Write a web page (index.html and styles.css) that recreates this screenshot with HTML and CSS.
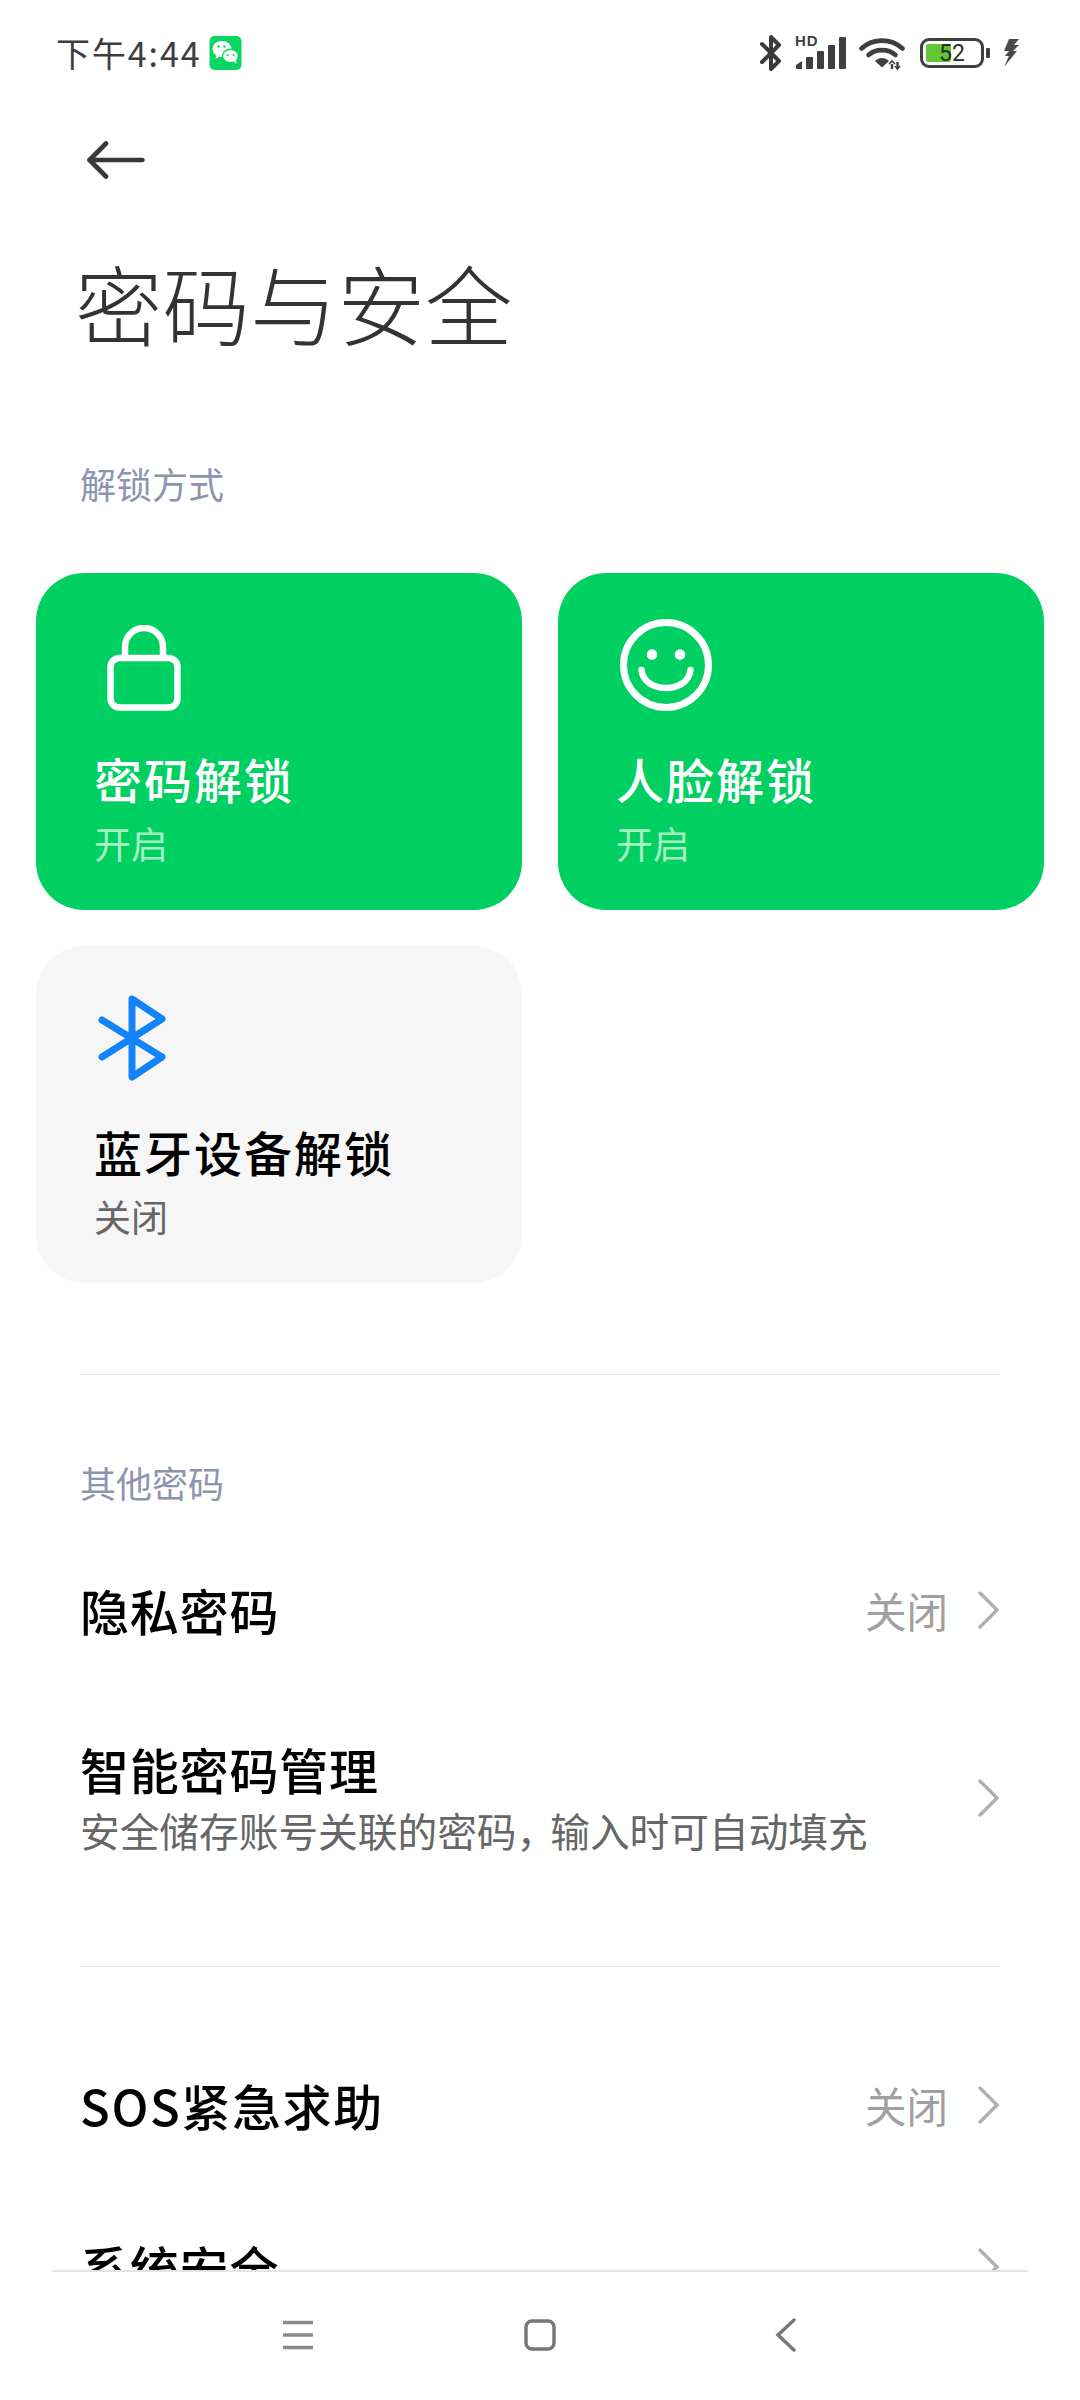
FILE: index.html
```html
<!DOCTYPE html>
<html lang="zh-CN">
<head>
<meta charset="utf-8">
<title>密码与安全</title>
<link rel="stylesheet" href="styles.css">
</head>
<body>
<div class="phone">
  <header class="status">
    <div class="status-left">
      <span class="clock">下午4:44</span>
      <svg class="wechat" viewBox="0 0 32 34"><rect width="32" height="34" rx="5" fill="#0ad664"/><ellipse cx="12.5" cy="13" rx="9.5" ry="8" fill="#fff"/><path d="M7 18l-1 5 5-3z" fill="#fff"/><ellipse cx="21" cy="20" rx="8" ry="6.8" fill="#fff" stroke="#0ad664" stroke-width="1.4"/><path d="M24 25l3 3-.5-5z" fill="#fff"/><circle cx="9" cy="10.5" r="1.2" fill="#0ad664"/><circle cx="15" cy="10.5" r="1.2" fill="#0ad664"/><circle cx="18" cy="19" r="1" fill="#0ad664"/><circle cx="24" cy="19" r="1" fill="#0ad664"/></svg>
    </div>
    <div class="status-right">
      <svg class="st-bt" viewBox="0 0 24 38"><path d="M3 10l17 17-8 8V3l8 8L3 28" fill="none" stroke="#3a3a3a" stroke-width="4" stroke-linejoin="round" stroke-linecap="round"/></svg>
      <div class="st-signal">
        <span class="hd">HD</span>
        <svg viewBox="0 0 51 32"><g fill="#3f3f3f"><path d="M2 32a1 1 0 0 1-1-1v-3l6-4v8z"/><rect x="11" y="20" width="7" height="12" rx="1"/><rect x="22" y="14" width="7" height="18" rx="1"/><rect x="33" y="8" width="7" height="24" rx="1"/><rect x="44" y="0" width="7" height="32" rx="1"/></g></svg>
      </div>
      <svg class="st-wifi" viewBox="0 0 46 34"><g fill="none" stroke="#3f3f3f" stroke-width="4.6" stroke-linecap="round"><path d="M2.5 12.5C14 2 32 2 43.5 12.5"/><path d="M9.5 19C17 12.500 29 12.500 36.500 19"/></g><path d="M16 25c4-4 10-4 14 0l-7 6.500z" fill="#3f3f3f"/><path d="M33 28v5M38.500 26v7" stroke="#3f3f3f" stroke-width="2.400" fill="none"/><path d="M30 28l3-3 3 3M36 30l2.500 3 2.500-3" fill="none" stroke="#3f3f3f" stroke-width="1.600"/></svg>
      <div class="battery">
        <div class="bat-body"><div class="bat-fill"></div><span class="bat-num">52</span></div>
        <div class="bat-nub"></div>
      </div>
      <svg class="st-bolt" viewBox="0 0 17 28"><path d="M6 0h10l-5 6h5L10 12h4L1 28l5-11H2l4-5H1z" fill="#4a4a4a"/></svg>
    </div>
  </header>

  <main class="content">
    <button class="back" aria-label="返回">
      <svg viewBox="0 0 59 38"><path d="M20 2.500L3.500 19 20 35.500M3.500 19H56.500" fill="none" stroke="#383838" stroke-width="4.600" stroke-linecap="round" stroke-linejoin="round"/></svg>
    </button>
    <h1 class="title">密码与安全</h1>
    <div class="section-label first">解锁方式</div>

    <div class="cards">
      <article class="card on">
        <div class="card-icon">
          <svg class="i-lock" viewBox="0 0 74 86"><path d="M18 33V22a19 19 0 0 1 38 0v11" fill="none" stroke="#fff" stroke-width="6.500"/><rect x="3.500" y="33" width="67" height="49.500" rx="9" fill="none" stroke="#fff" stroke-width="6.500"/></svg>
        </div>
        <div class="card-name">密码解锁</div>
        <div class="card-state">开启</div>
      </article>
      <article class="card on">
        <div class="card-icon">
          <svg class="i-face" viewBox="0 0 92 92"><circle cx="46" cy="46" r="42.500" fill="none" stroke="#fff" stroke-width="7"/><circle cx="32" cy="35.500" r="5.300" fill="#fff"/><circle cx="60" cy="35.500" r="5.300" fill="#fff"/><path d="M21.500 51C24 75 68 75 70.500 51" fill="none" stroke="#fff" stroke-width="6.500" stroke-linecap="round"/></svg>
        </div>
        <div class="card-name">人脸解锁</div>
        <div class="card-state">开启</div>
      </article>
      <article class="card off">
        <div class="card-icon">
          <svg class="i-bt" viewBox="0 0 68 86"><path d="M4 25l60 37-30 20V4l30 20L4 62" fill="none" stroke="#1283f8" stroke-width="7" stroke-linecap="round" stroke-linejoin="round"/></svg>
        </div>
        <div class="card-name">蓝牙设备解锁</div>
        <div class="card-state">关闭</div>
      </article>
    </div>

    <hr class="divider d1">
    <div class="section-label second">其他密码</div>

    <div class="row r-single r-privacy">
      <div class="row-text"><div class="row-name">隐私密码</div></div>
      <span class="row-value">关闭</span>
      <svg class="chev" viewBox="0 0 22 38"><path d="M2 2l17 17L2 36" fill="none" stroke="#b0b0b0" stroke-width="3.400" stroke-linecap="round"/></svg>
    </div>
    <div class="row r-smart">
      <div class="row-text">
        <div class="row-name">智能密码管理</div>
        <div class="row-desc">安全储存账号关联的密码<span class="comma">，</span>输入时可自动填充</div>
      </div>
      <svg class="chev chev-low" viewBox="0 0 22 38"><path d="M2 2l17 17L2 36" fill="none" stroke="#b0b0b0" stroke-width="3.400" stroke-linecap="round"/></svg>
    </div>

    <hr class="divider d2">

    <div class="row r-single r-sos">
      <div class="row-text"><div class="row-name">SOS紧急求助</div></div>
      <span class="row-value">关闭</span>
      <svg class="chev" viewBox="0 0 22 38"><path d="M2 2l17 17L2 36" fill="none" stroke="#b0b0b0" stroke-width="3.400" stroke-linecap="round"/></svg>
    </div>
    <div class="row r-single r-sys">
      <div class="row-text"><div class="row-name">系统安全</div></div>
      <svg class="chev" viewBox="0 0 22 38"><path d="M2 2l17 17L2 36" fill="none" stroke="#b0b0b0" stroke-width="3.400" stroke-linecap="round"/></svg>
    </div>
  </main>

  <nav class="navbar">
    <svg class="nav-menu" viewBox="0 0 32 30"><path d="M1 2.500h30M1 15h30M1 27.500h30" stroke="#8a8a8a" stroke-width="3.400" fill="none"/></svg>
    <svg class="nav-home" viewBox="0 0 32 32"><rect x="2" y="2" width="28" height="28" rx="6" fill="none" stroke="#777" stroke-width="3.400"/></svg>
    <svg class="nav-back" viewBox="0 0 22 34"><path d="M19 2L3 17l16 15" fill="none" stroke="#777" stroke-width="3.400" stroke-linecap="round"/></svg>
  </nav>
</div>
</body>
</html>
```

FILE: styles.css
```css
* { box-sizing: border-box; }
html, body { margin: 0; padding: 0; background: #fff; }
body { font-family: "Noto Sans CJK SC", "Noto Sans", sans-serif; color: #000; }

.phone { width: 1080px; height: 2400px; display: flex; flex-direction: column; overflow: hidden; background: #fff; }

/* status bar */
.status { height: 106px; flex: none; display: flex; justify-content: space-between; align-items: flex-start; padding: 36px 60px 0 56px; }
.status-left { display: flex; align-items: center; gap: 8px; height: 34px; }
.clock { font-size: 34px; line-height: 34px; letter-spacing: 1.900px; color: #3d3d3d; font-family: "Noto Sans CJK SC", sans-serif; }
.wechat { width: 33px; height: 34px; display: block; }
.status-right { display: flex; align-items: center; height: 34px; }
.st-bt { width: 24px; height: 38px; margin-right: 12px; }
.st-signal { position: relative; width: 51px; height: 32px; margin-right: 13px; }
.st-signal svg { display: block; width: 51px; height: 32px; }
.hd { position: absolute; left: 0; top: -3px; font: 700 15px/14px "Liberation Sans", sans-serif; letter-spacing: 1px; color: #3f3f3f; }
.st-wifi { width: 46px; height: 34px; margin-right: 15px; }
.battery { display: flex; align-items: center; gap: 2px; margin-right: 13px; }
.bat-body { position: relative; width: 64px; height: 30px; border: 3.500px solid #3f3f3f; border-radius: 9px; padding: 3px; }
.bat-fill { width: 25px; height: 100%; background: #62c733; border-radius: 2px; }
.bat-num { position: absolute; inset: 0; display: flex; align-items: center; justify-content: center; font: 400 23px/1 "Roboto", sans-serif; color: #2c2c2c; }
.bat-nub { width: 4px; height: 10px; background: #3f3f3f; border-radius: 1px; }
.st-bolt { width: 17px; height: 28px; }

/* page */
.content { flex: 1; min-height: 0; overflow: hidden; padding: 0 36px; }
.back { display: block; width: 59px; height: 38px; margin: 35px 0 0 50px; padding: 0; border: 0; background: none; }
.back svg { display: block; width: 59px; height: 38px; }
.title { margin: 0 0 0 39px; padding-top: 73px; font-size: 87.500px; line-height: 100px; font-weight: 300; color: #333; }
.section-label { margin-left: 44px; font-size: 36px; line-height: 50px; color: #8d94b0; }
.section-label.first { margin-top: 106px; }
.section-label.second { margin-top: 82px; }

/* cards */
.cards { display: grid; grid-template-columns: 486px 486px; grid-auto-rows: 337px; gap: 36px; margin-top: 65px; }
.card { border-radius: 48px; padding: 46px 0 0 58px; }
.card.on { background: #00d062; color: #fff; }
.card.off { background: #f6f6f6; }
.card-icon { height: 95px; display: flex; align-items: flex-start; }
.i-lock { width: 74px; height: 86px; margin: 6px 0 0 13px; }
.i-face { width: 92px; height: 92px; margin-left: 4px; }
.i-bt { width: 68px; height: 86px; margin: 3px 0 0 4px; }
.card-name { margin-top: 30px; font-size: 48px; line-height: 68px; font-weight: 500; letter-spacing: 2px; }
.card-state { font-size: 37px; line-height: 50px; margin-top: 6px; }
.card.on .card-state { color: #a4f1c3; }
.card.off .card-state { color: #666; }

/* dividers */
.divider { margin: 0 44px; height: 1px; border: 0; background: #dedede; }
.d1 { margin-top: 91px; }
.d2 { margin-top: 82px; }

/* rows */
.row { display: flex; align-items: center; padding: 0 44px 0 44px; }
.row-text { flex: 1; min-width: 0; }
.row-name { font-size: 49px; line-height: 68px; font-weight: 500; letter-spacing: 0.800px; }
.r-sos .row-name { letter-spacing: 1.600px; }
.row-desc { font-size: 39.700px; line-height: 56px; color: #666; margin-top: -1px; white-space: nowrap; }
.comma { letter-spacing: -8px; margin-right: 2px; }
.row-value { font-size: 41.500px; line-height: 56px; color: #a0a0a0; margin-right: 30px; }
.chev { width: 22px; height: 38px; flex: none; }
.chev-low { margin-top: 3px; }
.r-privacy { height: 110px; margin-top: 48px; }
.r-smart { height: 176px; margin-top: 43px; }
.r-sos { height: 110px; margin-top: 83px; }
.r-sys { height: 110px; margin-top: 52px; }

/* navigation */
.navbar { position: relative; flex: none; height: 130px; margin: 0 52px; border-top: 2px solid #e4e4e4; background: #fff; display: flex; align-items: center; justify-content: center; }
.navbar svg { position: absolute; display: block; }
.nav-menu { left: 230px; top: 48px; width: 32px; height: 30px; }
.nav-home { left: 472px; top: 47px; width: 32px; height: 32px; }
.nav-back { left: 723px; top: 46px; width: 22px; height: 34px; }
```
